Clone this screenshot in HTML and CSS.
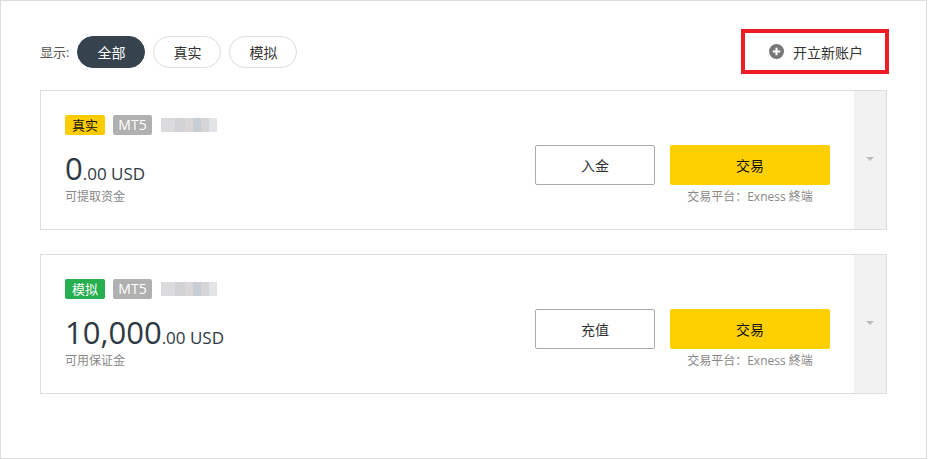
FILE: index.html
```html
<!DOCTYPE html>
<html lang="zh">
<head>
    <meta charset="UTF-8">
    <title>账户</title>
    <link rel="stylesheet" href="styles.css">
</head>
<body>
    <div class="page">
        <div class="toolbar">
            <div class="filter">
                <span class="filter-label">显示:</span>
                <a class="pill active">全部</a>
                <a class="pill">真实</a>
                <a class="pill">模拟</a>
            </div>
            <a class="new-account">
                <svg width="15" height="15" viewBox="0 0 16 16">
                    <circle cx="8" cy="8" r="8" fill="#777"/>
                    <path d="M8 4v8M4 8h8" stroke="#fff" stroke-width="2.2"/>
                </svg>
                <span>开立新账户</span>
            </a>
        </div>

        <div class="card">
            <div class="card-main">
                <div class="info">
                    <div class="tags">
                        <span class="tag real">真实</span>
                        <span class="tag mt">MT5</span>
                        <span class="blur"></span>
                    </div>
                    <div class="amount"><span class="big">0</span>.00 USD</div>
                    <div class="caption">可提取资金</div>
                </div>
                <div class="actions">
                    <div class="btn-row">
                        <a class="btn outline">入金</a>
                        <div class="trade">
                            <a class="btn yellow">交易</a>
                            <div class="platform">交易平台：Exness 終端</div>
                        </div>
                    </div>
                </div>
            </div>
            <div class="side"><span class="caret"></span></div>
        </div>

        <div class="card">
            <div class="card-main">
                <div class="info">
                    <div class="tags">
                        <span class="tag demo">模拟</span>
                        <span class="tag mt">MT5</span>
                        <span class="blur"></span>
                    </div>
                    <div class="amount"><span class="big">10,000</span>.00 USD</div>
                    <div class="caption">可用保证金</div>
                </div>
                <div class="actions">
                    <div class="btn-row">
                        <a class="btn outline">充值</a>
                        <div class="trade">
                            <a class="btn yellow">交易</a>
                            <div class="platform">交易平台：Exness 終端</div>
                        </div>
                    </div>
                </div>
            </div>
            <div class="side"><span class="caret"></span></div>
        </div>
    </div>
</body>
</html>
```

FILE: styles.css
```css
* {
    padding: 0;
    margin: 0;
    box-sizing: border-box;
}
body {
    font-family: "Open Sans", "Noto Sans CJK SC", sans-serif;
    color: #333;
    background: #fff;
}
.page {
    width: 927px;
    height: 459px;
    border: 1px solid #ddd;
    padding: 28px 39px 0;
}
.toolbar {
    display: flex;
    justify-content: space-between;
    align-items: center;
    height: 45px;
    margin-right: -2px;
    margin-bottom: 16px;
}
.filter {
    display: flex;
    align-items: center;
    gap: 8px;
}
.filter-label {
    font-size: 13px;
    color: #555;
}
.pill {
    display: flex;
    align-items: center;
    justify-content: center;
    width: 68px;
    height: 32px;
    border: 1px solid #ddd;
    border-radius: 16px;
    font-size: 14px;
    color: #333;
}
.pill.active {
    background: #36434f;
    border-color: #36434f;
    color: #fff;
}
.new-account {
    display: flex;
    align-items: center;
    justify-content: center;
    gap: 9px;
    width: 148px;
    height: 45px;
    border: 4px solid #ee1c25;
    font-size: 14px;
    color: #333;
    padding-left: 2px;
}
.new-account svg {
    display: block;
}
.card {
    display: flex;
    height: 140px;
    border: 1px solid #ddd;
    margin-bottom: 24px;
}
.card-main {
    flex: 1;
    display: flex;
    justify-content: space-between;
    padding: 24px 24px 0;
}
.tags {
    display: flex;
    align-items: center;
    gap: 8px;
    height: 20px;
}
.tag {
    height: 20px;
    line-height: 20px;
    border-radius: 2px;
    font-size: 13px;
    text-align: center;
}
.tag.real { background: #ffcc00; color: #111; width: 40px; }
.tag.demo { background: #26ae4f; color: #fff; width: 40px; }
.tag.mt { background: #b0b0b0; color: #fff; font-size: 14px; width: 39px; }
.blur {
    width: 56px;
    height: 14px;
    margin-left: 1px;
    background:
        linear-gradient(90deg, #d7d7da 0 14px, #cdcdd2 14px 24px, #d8d2d2 24px 32px, #c2c8d0 32px 40px, #d3d0d4 40px 48px, #dfe1e5 48px);
    opacity: 0.9;
}
.amount {
    margin-top: 15px;
    font-size: 17px;
    line-height: 36px;
    height: 36px;
    color: #2f3943;
    white-space: nowrap;
}
.big {
    font-size: 31px;
}
.caption {
    margin-top: 3px;
    font-size: 12px;
    line-height: 16px;
    color: #888;
}
.actions {
    padding-top: 30px;
}
.btn-row {
    display: flex;
    gap: 15px;
}
.btn {
    display: flex;
    align-items: center;
    justify-content: center;
    height: 40px;
    font-size: 14px;
    color: #333;
    border-radius: 2px;
}
.btn.outline {
    width: 120px;
    border: 1px solid #aaa;
}
.btn.yellow {
    width: 160px;
    background: #ffcf00;
    color: #111;
}
.platform {
    margin-top: 3px;
    text-align: center;
    font-size: 12px;
    line-height: 18px;
    color: #888;
}
.side {
    width: 32px;
    background: #f2f2f2;
    display: flex;
    align-items: center;
    justify-content: center;
}
.caret {
    width: 0;
    height: 0;
    border-left: 4px solid transparent;
    border-right: 4px solid transparent;
    border-top: 4px solid #bbb;
    margin-top: -2px;
}
```
